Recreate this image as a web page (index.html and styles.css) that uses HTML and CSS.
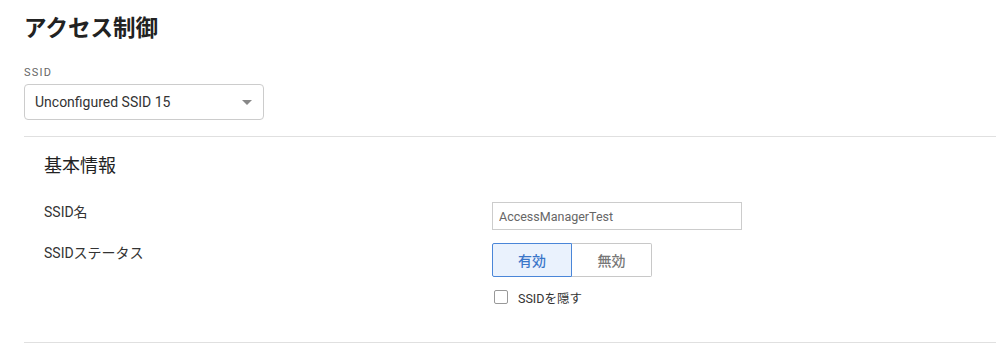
FILE: index.html
```html
<!DOCTYPE html>
<html lang="ja">
<head>
  <meta charset="UTF-8" />
  <meta name="viewport" content="width=device-width, initial-scale=1.0" />
  <title>アクセス制御</title>
  <link rel="stylesheet" href="styles.css">
</head>
<body>
  <div class="page">
    <h1 class="page-title">アクセス制御</h1>

    <div class="field-label">SSID</div>
    <div class="select-box">
      <span>Unconfigured SSID 15</span>
      <svg class="caret" width="10" height="5" viewBox="0 0 10 5"><path d="M0 0 L10 0 L5 5 Z" fill="#888"/></svg>
    </div>

    <div class="section">
      <h2 class="section-title">基本情報</h2>

      <div class="row">
        <div class="row-label">SSID名</div>
        <div class="row-control">
          <input class="text-input" type="text" value="AccessManagerTest" />
        </div>
      </div>

      <div class="row status-row">
        <div class="row-label">SSIDステータス</div>
        <div class="row-control">
          <div class="toggle">
            <button class="toggle-btn active">有効</button>
            <button class="toggle-btn">無効</button>
          </div>
          <label class="check">
            <input type="checkbox" />
            <span>SSIDを隠す</span>
          </label>
        </div>
      </div>
    </div>
  </div>
</body>
</html>
```

FILE: styles.css
```css
body {
  margin: 0;
  padding: 0;
  background: #fff;
  color: #333;
  font-family: Roboto, "Noto Sans CJK JP", sans-serif;
}
.page {
  padding-left: 24px;
  padding-top: 14px;
}
.page-title {
  margin: 0;
  font-size: 22.5px;
  line-height: 28px;
  font-weight: 700;
  color: #222;
}
.field-label {
  margin-top: 23px;
  font-size: 11px;
  line-height: 16px;
  letter-spacing: 1.2px;
  color: #666;
}
.select-box {
  margin-top: 3px;
  width: 240px;
  height: 36px;
  box-sizing: border-box;
  border: 1px solid #ccc;
  border-radius: 4px;
  padding: 0 10px;
  display: flex;
  align-items: center;
  justify-content: space-between;
  font-size: 14px;
  color: #333;
}
.caret { margin-right: 1px; }
.section {
  margin-top: 16px;
  border-top: 1px solid #e0e0e0;
  border-bottom: 1px solid #e0e0e0;
  padding: 17px 0 35px 20px;
}
.section-title {
  margin: 0 0 24px;
  font-size: 18px;
  line-height: 24px;
  font-weight: 400;
  color: #222;
}
.row {
  display: flex;
  align-items: flex-start;
}
.status-row { margin-top: 13px; }
.row-label {
  width: 448px;
  font-size: 14px;
  line-height: 20px;
  color: #333;
}
.text-input {
  width: 250px;
  height: 28px;
  box-sizing: border-box;
  border: 1px solid #ccc;
  border-radius: 0;
  padding: 0 6px;
  font-family: Roboto, "Noto Sans CJK JP", sans-serif;
  font-size: 12.5px;
  color: #666;
  display: block;
}
.toggle {
  display: flex;
}
.toggle-btn {
  width: 80px;
  height: 34px;
  box-sizing: border-box;
  background: #fff;
  border: 1px solid #c8c8c8;
  font-family: Roboto, "Noto Sans CJK JP", sans-serif;
  font-size: 14px;
  font-weight: 500;
  color: #777;
  padding: 0;
}
.toggle-btn:first-child { border-radius: 2px 0 0 2px; }
.toggle-btn:last-child { border-left: none; border-radius: 0 2px 2px 0; }
.toggle-btn.active {
  background: #eaf2fd;
  border-color: #4a86d8;
  color: #3a76c9;
}
.check {
  margin-top: 10px;
  display: flex;
  align-items: center;
  height: 20px;
  font-size: 12.5px;
  color: #333;
  padding-left: 2px;
}
.check input {
  appearance: none;
  margin: 0 10px 0 0;
  width: 14px;
  height: 14px;
  border: 1px solid #999;
  border-radius: 2px;
  background: #fff;
}
```
